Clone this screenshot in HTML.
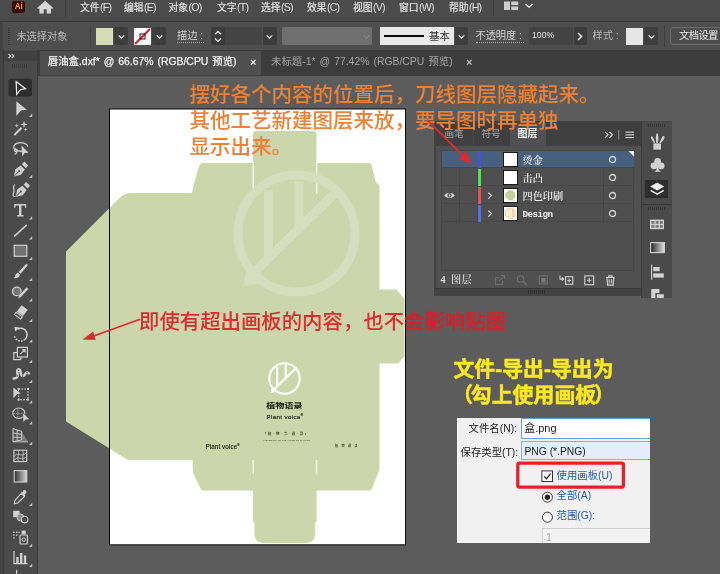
<!DOCTYPE html>
<html lang="zh-CN">
<head>
<meta charset="utf-8">
<title>Illustrator</title>
<style>
html,body{margin:0;padding:0;}
body{width:720px;height:574px;overflow:hidden;position:relative;background:#5c5c5c;
  font-family:"Liberation Sans","Noto Sans CJK SC",sans-serif;color:#d6d6d6;}
.abs{position:absolute;}
.t{position:absolute;white-space:nowrap;line-height:1;}
/* top bars */
#menubar{left:0;top:0;width:720px;height:21px;background:#4b4b4b;}
#ctrlbar{left:0;top:22px;width:720px;height:28px;background:#4e4e4e;}
#tabbar{left:0;top:50px;width:720px;height:26px;background:#3c3c3c;}
.menu{font-size:9.8px;top:2.2px;color:#e2e2e2;-webkit-text-stroke:0.2px #e2e2e2;}
.ml{font-size:10.6px;letter-spacing:-0.75px;-webkit-text-stroke:0;margin-left:0.3px}
.ctl{font-size:10.2px;color:#d2d2d2;top:31px;}
.dd{position:absolute;top:27px;height:18px;background:#3d3d3d;border-radius:2px;}
.chev{position:absolute;width:9px;height:6px;transform:scale(0.8);}
/* toolbar */
#toolbar{left:0;top:72px;width:31px;height:502px;background:#4b4b4b;}
/* layers */
#layers{left:435px;top:121px;width:206px;height:175px;background:#4d4d4d;}
.row{position:absolute;left:6px;width:194px;height:17px;border-bottom:1px solid #454545;}
.lname{position:absolute;left:81px;top:2px;font-size:11px;line-height:14px;color:#e2e2e2;
  font-family:"Liberation Mono","Noto Serif CJK SC",monospace;white-space:nowrap;}
/* dialog */
#dlg{left:457px;top:418px;width:193px;height:124.5px;background:#f1f1f1;overflow:hidden;color:#111;box-shadow:inset 1px 0 0 #fafafa, inset 0 -1px 0 #fafafa;}
</style>
</head>
<body>
<div id="wrap" style="position:absolute;left:0;top:0;width:720px;height:574px;will-change:transform;">


<!-- ===== top bars ===== -->
<div class="abs" id="menubar"></div>
<div class="abs" style="left:0;top:21px;width:720px;height:1px;background:#3a3a3a"></div>
<div class="abs" id="ctrlbar"></div>
<div class="abs" id="tabbar"></div>
<!-- Ai logo -->
<div class="abs" style="left:12px;top:1px;width:13.2px;height:12.2px;border-radius:2.4px;background:#3a0b04;"></div>
<div class="t" style="left:14.8px;top:2.8px;font-size:8.2px;font-weight:bold;color:#ff9d2a;letter-spacing:-0.1px">Ai</div>
<!-- home -->
<svg class="abs" style="left:37px;top:0" width="17" height="14" viewBox="37 0 17 14"><path fill="#d8d8d8" d="M45.2,0.8 L53.2,8 L52.4,8.9 L51,8.2 L51,13.4 L46.7,13.4 L46.7,9.2 L43.7,9.2 L43.7,13.4 L39.4,13.4 L39.4,8.2 L38,8.9 L37.2,8 Z"/></svg>
<div class="abs" style="left:65px;top:0;width:1px;height:17px;background:#3c3c3c"></div>
<div class="t menu" style="left:80px">文件<span class="ml">(F)</span></div>
<div class="t menu" style="left:124px">编辑<span class="ml">(E)</span></div>
<div class="t menu" style="left:168.5px">对象<span class="ml">(O)</span></div>
<div class="t menu" style="left:217px">文字<span class="ml">(T)</span></div>
<div class="t menu" style="left:261px">选择<span class="ml">(S)</span></div>
<div class="t menu" style="left:307px">效果<span class="ml">(C)</span></div>
<div class="t menu" style="left:353px">视图<span class="ml">(V)</span></div>
<div class="t menu" style="left:399px">窗口<span class="ml">(W)</span></div>
<div class="t menu" style="left:449px">帮助<span class="ml">(H)</span></div>
<div class="abs" style="left:493px;top:0;width:1px;height:16px;background:#3a3a3a"></div>
<svg class="abs" style="left:504px;top:1px" width="30" height="10" viewBox="0 0 30 10"><g fill="#cfcfcf"><rect x="0" y="0.5" width="6" height="8.5"/><rect x="7.2" y="0.5" width="7" height="3.6"/><rect x="7.2" y="5.4" width="7" height="3.6"/></g><path d="M21.5,3 L25,6.2 L28.5,3" fill="none" stroke="#e0e0e0" stroke-width="1.5"/></svg>

<!-- control bar -->
<div class="abs" style="left:0;top:22px;width:3.2px;height:28px;background:#434343"></div>
<div class="abs" style="left:0;top:49.5px;width:720px;height:1px;background:#3a3a3a"></div>
<svg class="abs" style="left:7px;top:27px" width="4" height="19" viewBox="0 0 4 19"><g fill="#383838"><rect x="1" y="1" width="2" height="1"/><rect x="1" y="3" width="2" height="1"/><rect x="1" y="5" width="2" height="1"/><rect x="1" y="7" width="2" height="1"/><rect x="1" y="9" width="2" height="1"/><rect x="1" y="11" width="2" height="1"/><rect x="1" y="13" width="2" height="1"/><rect x="1" y="15" width="2" height="1"/><rect x="1" y="17" width="2" height="1"/></g></svg>
<div class="abs" style="left:90px;top:26px;width:1px;height:21px;background:#444"></div>
<div class="t ctl" style="left:16.4px;top:31.6px;color:#b9b9b9">未选择对象</div>
<div class="abs" style="left:96px;top:28px;width:17px;height:17px;background:#d6ddb6"></div>
<div class="dd" style="left:114px;width:14px"></div>
<svg class="chev" style="left:116.5px;top:33.5px" viewBox="0 0 9 6"><path d="M1,1 L4.5,4.5 L8,1" fill="none" stroke="#f0f0f0" stroke-width="1.5"/></svg>
<svg class="abs" style="left:134px;top:28px" width="17" height="17" viewBox="0 0 17 17"><rect width="17" height="17" fill="#fafafa"/><line x1="1" y1="16" x2="16" y2="1" stroke="#e0202a" stroke-width="2"/><rect x="6" y="6" width="5" height="5" fill="none" stroke="#222" stroke-width="1"/></svg>
<div class="dd" style="left:152px;width:14px"></div>
<svg class="chev" style="left:154.5px;top:33.5px" viewBox="0 0 9 6"><path d="M1,1 L4.5,4.5 L8,1" fill="none" stroke="#f0f0f0" stroke-width="1.5"/></svg>
<div class="t ctl" style="left:177px;border-bottom:1px dotted #a8a8a8;padding-bottom:1px;width:27px">描边 :</div>
<div class="abs" style="left:211px;top:27px;width:13.5px;height:18px;background:#3c3c3c;border-radius:2px 0 0 2px"></div>
<svg class="abs" style="left:213px;top:29px" width="10" height="15" viewBox="0 0 10 15"><path d="M2,5.2 L5,2.4 L8,5.2 M2,9.6 L5,12.4 L8,9.6" fill="none" stroke="#e8e8e8" stroke-width="1.3"/></svg>
<div class="abs" style="left:225px;top:27px;width:36.5px;height:18px;background:#444444"></div>
<div class="abs" style="left:262.5px;top:27px;width:14px;height:18px;background:#3c3c3c;border-radius:0 2px 2px 0"></div>
<svg class="chev" style="left:265px;top:33.5px" viewBox="0 0 9 6"><path d="M1,1 L4.5,4.5 L8,1" fill="none" stroke="#e0e0e0" stroke-width="1.5"/></svg>
<div class="abs" style="left:282px;top:27px;width:90px;height:18px;background:#6f6f6f;border-radius:2px"></div>
<svg class="chev" style="left:362px;top:33.5px" viewBox="0 0 9 6"><path d="M1,1 L4.5,4.5 L8,1" fill="none" stroke="#888" stroke-width="1.5"/></svg>
<div class="abs" style="left:380px;top:27px;width:74px;height:18px;background:#e9e9e9;"></div>
<div class="abs" style="left:384px;top:35px;width:40px;height:2px;background:#0a0a0a;"></div>
<div class="t" style="left:429px;top:31px;font-size:10.5px;color:#333">基本</div>
<div class="dd" style="left:455px;width:13px;border-radius:0 2px 2px 0"></div>
<svg class="chev" style="left:457px;top:33.5px" viewBox="0 0 9 6"><path d="M1,1 L4.5,4.5 L8,1" fill="none" stroke="#f0f0f0" stroke-width="1.5"/></svg>
<div class="t ctl" style="left:475.5px;border-bottom:1px dotted #a8a8a8;padding-bottom:1px;width:48px">不透明度 :</div>
<div class="abs" style="left:529px;top:27px;width:44px;height:18px;background:#434343;border-radius:2px 0 0 2px"></div>
<div class="t" style="left:532px;top:31px;font-size:8.7px;color:#e6e6e6">100%</div>
<div class="abs" style="left:574px;top:27px;width:12.5px;height:18px;background:#3c3c3c;border-radius:0 2px 2px 0"></div>
<svg class="abs" style="left:577px;top:31.5px" width="6" height="9" viewBox="0 0 6 9"><path d="M1,1 L4.5,4.5 L1,8" fill="none" stroke="#f0f0f0" stroke-width="1.5"/></svg>
<div class="t ctl" style="left:592.5px;color:#b9b9b9">样式 :</div>
<div class="abs" style="left:626px;top:28px;width:17px;height:17px;background:#e6e6e6"></div>
<div class="dd" style="left:644px;width:14px"></div>
<svg class="chev" style="left:646.5px;top:33.5px" viewBox="0 0 9 6"><path d="M1,1 L4.5,4.5 L8,1" fill="none" stroke="#f0f0f0" stroke-width="1.5"/></svg>
<div class="abs" style="left:664px;top:26px;width:1px;height:21px;background:#3f3f3f"></div>
<div class="abs" style="left:670px;top:27px;width:60px;height:16px;border:1px solid #6b6b6b;border-radius:3px;background:#4c4c4c"></div>
<div class="t" style="left:679px;top:30.5px;font-size:10.3px;color:#ececec;letter-spacing:-0.6px">文档设置</div>

<!-- tab bar -->
<div class="abs" style="left:39.5px;top:50.5px;width:221.5px;height:24.5px;background:#4f4f4f"></div>
<div class="t" style="left:47.8px;top:57px;font-size:10.4px;word-spacing:1.1px;color:#f2f2f2;-webkit-text-stroke:0.25px #f2f2f2;">唇油盒.dxf* @ 66.67% (RGB/CPU 预览)</div>
<div class="t" style="left:250px;top:56.5px;font-size:11px;font-weight:bold;color:#f0f0f0;">×</div>
<div class="t" style="left:271px;top:57px;font-size:10.4px;word-spacing:1.2px;color:#a6a6a6;">未标题-1* @ 77.42% (RGB/CPU 预览)</div>
<div class="t" style="left:466px;top:56.5px;font-size:11px;font-weight:bold;color:#bdbdbd;">×</div>

<!-- ===== canvas & artwork ===== -->
<svg class="abs" style="left:0;top:75.5px" width="720" height="498.5" viewBox="0 75.5 720 498.5">
  <rect x="0" y="75.5" width="720" height="498.5" fill="#5c5c5c"/>
  <!-- artboard -->
  <rect x="109.5" y="108.5" width="296" height="435.8" fill="#ffffff"/>
  <!-- die shape -->
  <path id="die" fill="#cdd6aa" d="M66,251 L120,197 Q125,192.5 131,192.5 L192,192.5 L194.5,181 L199,166 Q200,162.5 203,162.5 L253,162.5 L253,134 Q253,130.5 257,130.5 L312,130.5 Q316.5,130.5 316.5,134 L316.5,162.5 L369,162.5 Q371,162.5 372,166 L375,179 Q376,183 379.5,185 L379.5,289 L396.5,289 L404.5,298.5 L404.5,355.5 L398,363 L379.5,363 L379.5,469 L378,473 L372,488 Q371.5,490 369,490 L316.6,490 L316.6,521 L315.2,522.4 L315.2,534 Q314.6,542 306.5,542.6 L263,542.6 Q255,542 254.4,534 L254.4,522.4 L253,521 L253,490 L203,490 Q201,490 200,487 L193,472 L192.5,459.5 L128,459.5 L66,421 Z"/>
  <!-- slits -->
  <g stroke="#ffffff" stroke-width="1.2">
    <line x1="253.2" y1="162" x2="253.2" y2="193"/>
    <line x1="316.6" y1="162" x2="316.6" y2="193"/>
    <line x1="253.3" y1="459.5" x2="253.3" y2="473.5"/>
    <line x1="316.5" y1="459.5" x2="316.5" y2="473.5"/>
  </g>
  <!-- big watermark logo -->
  <g fill="none" stroke="#d7debf" stroke-width="9" stroke-linejoin="round">
    <circle cx="296.5" cy="233" r="58.5"/>
    <line x1="335.5" y1="192" x2="250" y2="276"/>
    <line x1="299" y1="181" x2="299" y2="229"/>
    <path d="M268.5,189.5 L268.5,256"/>
  </g>
  <path d="M246,270 L243.5,285.5 L260,283 Z" fill="#d7debf"/>
  <!-- small white logo -->
  <g fill="none" stroke="#ffffff" stroke-width="2.1" stroke-linecap="butt">
    <circle cx="284.5" cy="378" r="15.2"/>
    <line x1="296.6" y1="367" x2="272.4" y2="390.6"/>
    <line x1="285.7" y1="364" x2="285.7" y2="377"/>
    <line x1="277.1" y1="366.4" x2="277.1" y2="385.4"/>
  </g>
  <path d="M271.6,388 L270.4,392.6 L275.4,391.8 Z" fill="#ffffff"/>
  <!-- artboard border -->
  <rect x="109.5" y="108.5" width="296" height="435.8" fill="none" stroke="#0a0a0a" stroke-width="1"/>
</svg>


<!-- ===== toolbar ===== -->
<div class="abs" style="left:0;top:50px;width:37.6px;height:524px;background:#4a4a4a"></div>
<div class="abs" style="left:0;top:50px;width:3.2px;height:524px;background:#434343"></div>
<div class="abs" style="left:3.2px;top:50px;width:1px;height:524px;background:#383838"></div>
<div class="abs" style="left:37px;top:50px;width:1px;height:524px;background:#3a3a3a"></div>
<div class="abs" style="left:4.2px;top:51px;width:32.8px;height:10px;background:#414141"></div>
<svg class="abs" style="left:0;top:50px" width="38" height="524" viewBox="0 50 38 524">
 <path d="M8.6,54 L10.6,56 L8.6,58 M11.8,54 L13.8,56 L11.8,58" fill="none" stroke="#d8d8d8" stroke-width="1.1"/>
 <g fill="#3a3a3a"><rect x="12" y="64" width="1" height="4"/><rect x="14" y="64" width="1" height="4"/><rect x="16" y="64" width="1" height="4"/><rect x="18" y="64" width="1" height="4"/><rect x="20" y="64" width="1" height="4"/><rect x="22" y="64" width="1" height="4"/><rect x="24" y="64" width="1" height="4"/><rect x="26" y="64" width="1" height="4"/></g>
 <!-- 1 selection -->
 <rect x="8.5" y="78.8" width="23.6" height="17.8" rx="2" fill="#2d2d2d"/>
 <path d="M16.1,81.6 L25.5,88.7 L20.5,89.7 L16.7,94.4 Z" fill="none" stroke="#ededed" stroke-width="1.2" stroke-linejoin="miter"/>
 <!-- 2 direct selection -->
 <path d="M16.3,101.3 L26.8,109.7 L21,110.6 L16.3,116 Z" fill="#d0d0d0"/><path d="M32.2,113.8 L32.2,117 L29,117 Z" fill="#c4c4c4"/>
 <!-- 3 magic wand -->
 <line x1="14.4" y1="135" x2="21.6" y2="127.8" stroke="#d0d0d0" stroke-width="2"/>
 <path d="M24,120.8 L24.8,123.6 L27.6,124.4 L24.8,125.2 L24,128 L23.2,125.2 L20.4,124.4 L23.2,123.6 Z" fill="#d0d0d0"/>
 <path d="M16.8,123.6 L17.3,125.3 L19,125.8 L17.3,126.3 L16.8,128 L16.3,126.3 L14.6,125.8 L16.3,125.3 Z" fill="#d0d0d0"/>
 <path d="M25.6,127.6 L26.1,129.1 L27.6,129.6 L26.1,130.1 L25.6,131.6 L25.1,130.1 L23.6,129.6 L25.1,129.1 Z" fill="#d0d0d0"/>
 <!-- 4 lasso -->
 <path d="M22,151.2 C16,151.5 13.4,149 13.8,146.6 C14.3,143.6 18.5,142.4 22,142.8 C25.6,143.2 27.8,144.8 27.6,146.6" fill="none" stroke="#d0d0d0" stroke-width="1.3"/>
 <path d="M15.5,148.4 C13.8,149.4 14.2,151.8 16.2,151.6 C17.8,151.4 17.6,149.2 16.2,149.4 C17.4,150.6 17.2,153.6 14.6,154.4" fill="none" stroke="#d0d0d0" stroke-width="1.1"/>
 <path d="M21.4,145.6 L28.6,152.8 L24.6,153 L22.2,156.6 Z" fill="#d0d0d0"/>
 <!-- 5 pen -->
 <path d="M13.8,176.6 L15.4,169.2 L20.6,165.4 L24.8,169.6 L21,174.8 Z" fill="#d0d0d0"/>
 <path d="M14.2,176.2 L18.6,171.6" stroke="#4a4a4a" stroke-width="0.9"/><circle cx="19" cy="171.2" r="1" fill="#4a4a4a"/>
 <path d="M21.8,164.2 L24.4,161.6 L28.2,165.4 L25.8,168.2 Z" fill="#d0d0d0"/><path d="M32.2,174.8 L32.2,178 L29,178 Z" fill="#c4c4c4"/>
 <!-- 6 curvature -->
 <path d="M15.6,197 L17.2,189.6 L22.4,185.8 L26.6,190 L22.8,195.2 Z" fill="#d0d0d0"/>
 <path d="M16,196.6 L20.4,192" stroke="#4a4a4a" stroke-width="0.9"/><circle cx="20.8" cy="191.6" r="1" fill="#4a4a4a"/>
 <path d="M23.6,184.6 L26.2,182 L30,185.8 L27.6,188.6 Z" fill="#d0d0d0"/>
 <path d="M14.6,184.4 C11.6,188.4 15.8,190 13.4,193.6 C12.4,195.6 13.6,196.8 15.4,196.4" fill="none" stroke="#d0d0d0" stroke-width="1.2"/>
 <!-- 7 type -->
 <path d="M14.2,204 L26.2,204 L26.2,207.8 L25.2,207.8 L24.6,205.6 L21.4,205.6 L21.4,214.8 L23.6,215.4 L23.6,216.4 L16.8,216.4 L16.8,215.4 L19,214.8 L19,205.6 L15.8,205.6 L15.2,207.8 L14.2,207.8 Z" fill="#d0d0d0"/><path d="M32.2,216.3 L32.2,219.5 L29,219.5 Z" fill="#c4c4c4"/>
 <!-- 8 line -->
 <line x1="14.2" y1="236.4" x2="26.8" y2="224.9" stroke="#d0d0d0" stroke-width="1.5"/><path d="M32.2,236.3 L32.2,239.5 L29,239.5 Z" fill="#c4c4c4"/>
 <!-- 9 rect -->
 <rect x="14.2" y="245.3" width="12.6" height="11" fill="#727272" stroke="#d0d0d0" stroke-width="1.2"/><path d="M32.2,256.8 L32.2,260 L29,260 Z" fill="#c4c4c4"/>
 <!-- 10 brush -->
 <path d="M26.6,264 C27.6,264.4 27.8,265.2 27.2,266 L20.6,273.8 L18.6,272 L25.6,264.4 C26,264 26.2,263.9 26.6,264 Z" fill="#d0d0d0"/>
 <path d="M18,272.8 L19.9,274.6 C19.8,277.4 17,278.8 13.8,278.2 C15.6,277 14.8,273.6 18,272.8 Z" fill="#d0d0d0"/><path d="M32.2,277.8 L32.2,281 L29,281 Z" fill="#c4c4c4"/>
 <!-- 11 shaper -->
 <circle cx="16.8" cy="291.4" r="4.3" fill="#767676" stroke="#d0d0d0" stroke-width="1.3"/>
 <path d="M18,298.6 L18.8,295.4 L26.6,287 L28.6,289 L20.8,297.4 Z" fill="#d0d0d0" stroke="#4a4a4a" stroke-width="0.5"/><path d="M32.2,298.3 L32.2,301.5 L29,301.5 Z" fill="#c4c4c4"/>
 <!-- 12 eraser -->
 <path d="M21.6,305.2 L27.8,309.8 L23,316 L16.8,311.4 Z" fill="#d0d0d0"/>
 <path d="M16.2,312.2 L22.4,316.8 L20.6,319 L14.4,314.4 Z" fill="none" stroke="#d0d0d0" stroke-width="1.1"/><path d="M32.2,318.8 L32.2,322 L29,322 Z" fill="#c4c4c4"/>
 <!-- 13 rotate -->
 <path d="M17.6,329 A6.4,6.4 0 1 1 14.6,336.4" fill="none" stroke="#d0d0d0" stroke-width="1.5" stroke-dasharray="20 1.2 1.6 1.2 1.6 1.2 1.6 1.2 1.6 1.2"/>
 <path d="M14.2,326.8 L19.4,327.4 L15.4,331.6 Z" fill="#d0d0d0"/><path d="M32.2,339.3 L32.2,342.5 L29,342.5 Z" fill="#c4c4c4"/>
 <!-- 14 scale -->
 <rect x="13.8" y="352.6" width="7" height="7" fill="none" stroke="#d0d0d0" stroke-width="1.2"/>
 <rect x="17.4" y="347.4" width="10" height="9.6" fill="#4a4a4a" stroke="#d0d0d0" stroke-width="1.2"/>
 <path d="M20.4,354.2 L24.6,350 M22.2,349.6 L25,349.6 L25,352.4" fill="none" stroke="#d0d0d0" stroke-width="1.1"/><path d="M32.2,359.8 L32.2,363 L29,363 Z" fill="#c4c4c4"/>
 <!-- 15 puppet warp -->
 <path d="M13.6,378.4 C16.6,378.6 18.6,376.6 17.6,373.8 C16.8,371.4 17,369.4 19,369.6 C21.2,369.8 20,372.6 21.2,374.8 C22.4,376.8 24.4,375.8 25.2,374 C26,372.2 27.8,371.8 28.8,373.4" fill="none" stroke="#d0d0d0" stroke-width="2.5" stroke-linecap="round"/>
 <circle cx="18.6" cy="370.2" r="1.9" fill="#d0d0d0"/>
 <circle cx="18.6" cy="370.2" r="0.7" fill="#4a4a4a"/><circle cx="17.8" cy="376" r="0.7" fill="#4a4a4a"/><circle cx="22.6" cy="376" r="0.7" fill="#4a4a4a"/><circle cx="27" cy="372.8" r="0.7" fill="#4a4a4a"/>
 <path d="M32.2,379.8 L32.2,383 L29,383 Z" fill="#c4c4c4"/>
 <!-- 16 free transform -->
 <path d="M13.4,387.4 L20.8,393.6 L16.8,394.2 L13.4,398.6 Z" fill="#d0d0d0"/>
 <rect x="18.6" y="389" width="9.4" height="10.6" fill="none" stroke="#d0d0d0" stroke-width="1.1" stroke-dasharray="1.6 1.3"/>
 <g fill="#d0d0d0"><rect x="17.6" y="388" width="2" height="2"/><rect x="27" y="388" width="2" height="2"/><rect x="27" y="398.6" width="2" height="2"/><rect x="17.6" y="398.6" width="2" height="2"/></g><path d="M32.2,400.3 L32.2,403.5 L29,403.5 Z" fill="#c4c4c4"/>
 <!-- 17 shape builder -->
 <ellipse cx="18.8" cy="413.2" rx="6" ry="5.2" fill="none" stroke="#d0d0d0" stroke-width="1.1"/>
 <path d="M13.8,413.4 L21.6,413.4 M17.8,409.4 L17.8,417.4" stroke="#d0d0d0" stroke-width="0.7" stroke-dasharray="1.4 0.8"/>
 <path d="M22.6,412.4 L29.8,419.4 L25.6,419.8 L23.2,422.6 Z" fill="#d0d0d0" stroke="#4a4a4a" stroke-width="0.5"/>
 <path d="M32.2,421.3 L32.2,424.5 L29,424.5 Z" fill="#c4c4c4"/>
 <!-- 18 perspective grid -->
 <path d="M21.6,431.6 L28,441.4 L21.6,441.4 Z" fill="#7a7a7a"/>
 <path d="M13,428.6 L21.6,431.4 L21.6,440 L13,441.6 Z" fill="#555" stroke="#d0d0d0" stroke-width="1"/>
 <path d="M17.2,430 L17.2,440.8 M13,433 L21.6,434.4 M13,437.2 L21.6,437.4" stroke="#d0d0d0" stroke-width="0.9" fill="none"/>
 <path d="M12.6,441.8 L28,441.8" stroke="#d0d0d0" stroke-width="0.9"/>
 <path d="M32.2,441.8 L32.2,445 L29,445 Z" fill="#c4c4c4"/>
 <!-- 19 mesh -->
 <rect x="13.9" y="450.2" width="12.8" height="11.4" fill="none" stroke="#d0d0d0" stroke-width="1.1"/>
 <path d="M13.9,457 C17,450.6 21.6,458.6 26.7,452.4 M13.9,460.6 C18,454.6 22,462 26.7,456.4 M17.6,450.2 C21,453 15.4,458 19,461.6 M22,450.2 C25.6,453.6 20.4,458 24,461.6" fill="none" stroke="#d0d0d0" stroke-width="0.8"/>
 <!-- 20 gradient -->
 <rect x="14.2" y="470.6" width="12.6" height="11.4" fill="url(#tg)" stroke="#d0d0d0" stroke-width="1.1"/>
 <!-- 21 eyedropper -->
 <path d="M23.2,490.6 C24.6,489 27.4,491.2 26.2,493 L24.6,494.8 L25.4,495.6 L24.4,496.6 L20.8,493 L21.8,492 L22.6,492.6 Z" fill="#d0d0d0"/>
 <path d="M21.2,493.4 L24.4,496.6 L17.6,503 L14.2,504 L15,500.4 Z" fill="none" stroke="#d0d0d0" stroke-width="1.1" stroke-linejoin="round"/><path d="M32.2,502.8 L32.2,506 L29,506 Z" fill="#c4c4c4"/>
 <!-- 22 blend -->
 <rect x="13.2" y="510.8" width="6.4" height="6.4" fill="#d0d0d0"/>
 <circle cx="20.4" cy="517.4" r="3.4" fill="#8a8a8a" stroke="#d0d0d0" stroke-width="0.9"/>
 <circle cx="24.6" cy="519.6" r="3.3" fill="#4a4a4a" stroke="#d0d0d0" stroke-width="1.1"/>
 <!-- 23 symbol sprayer -->
 <rect x="20" y="535" width="7.4" height="9" rx="1" fill="none" stroke="#d0d0d0" stroke-width="1.2"/>
 <rect x="21.6" y="530.6" width="4.2" height="3.6" fill="#d0d0d0"/>
 <circle cx="23.7" cy="539.6" r="1.7" fill="none" stroke="#d0d0d0" stroke-width="1"/>
 <g fill="#d0d0d0"><rect x="13.2" y="531.6" width="1.4" height="1.4"/><rect x="16" y="531.6" width="1.4" height="1.4"/><rect x="18.4" y="531.6" width="1.2" height="1.4"/><rect x="13.2" y="534.4" width="1.4" height="1.4"/><rect x="16" y="534.4" width="1.4" height="1.4"/><rect x="13.2" y="537.2" width="1.4" height="1.4"/></g><path d="M32.2,543.8 L32.2,547 L29,547 Z" fill="#c4c4c4"/>
 <!-- 24 graph -->
 <path d="M14,551 L14,563.6 L27.6,563.6" fill="none" stroke="#d0d0d0" stroke-width="1.2"/>
 <g fill="#d0d0d0"><rect x="16.2" y="557" width="2.4" height="6"/><rect x="20" y="553" width="2.4" height="10"/><rect x="23.8" y="555.4" width="2.4" height="7.6"/></g><path d="M32.2,563.8 L32.2,567 L29,567 Z" fill="#c4c4c4"/>
 <line x1="16.6" y1="570" x2="16.6" y2="574" stroke="#d0d0d0" stroke-width="1.2"/>
 <defs><linearGradient id="tg" x1="0" x2="1" y1="0" y2="0"><stop offset="0" stop-color="#2e2e2e"/><stop offset="1" stop-color="#d8d8d8"/></linearGradient></defs>
</svg>


<!-- ===== layers panel ===== -->
<div class="abs" style="left:434px;top:121px;width:207px;height:175px;background:#414141"></div>
<div class="abs" style="left:435.5px;top:122.5px;width:205px;height:23px;background:#3f3f3f"></div>
<div class="abs" style="left:435.5px;top:145.5px;width:205px;height:143px;background:#505050"></div>
<div class="abs" style="left:509.5px;top:122.5px;width:36px;height:24px;background:#505050"></div>
<div class="abs" style="left:472.5px;top:124px;width:1px;height:21px;background:#4a4a4a"></div>
<div class="t" style="left:444.5px;top:128.5px;font-size:9.6px;color:#a8a8a8;">画笔</div>
<div class="t" style="left:481.5px;top:128.5px;font-size:9.6px;color:#a8a8a8;">符号</div>
<div class="t" style="left:517.5px;top:128.5px;font-size:10px;color:#f4f4f4;font-weight:bold">图层</div>
<svg class="abs" style="left:603px;top:128px" width="34" height="14" viewBox="0 0 34 14"><path d="M2,3.8 L5,6.8 L2,9.8 M6.4,3.8 L9.4,6.8 L6.4,9.8" fill="none" stroke="#dcdcdc" stroke-width="1.2"/><rect x="15.2" y="2" width="1.1" height="9.5" fill="#8a8a8a"/><g fill="#d8d8d8"><rect x="22.4" y="3.6" width="8.6" height="1.1"/><rect x="22.4" y="6.3" width="8.6" height="1.1"/><rect x="22.4" y="9" width="8.6" height="1.1"/></g></svg>
<!-- list box -->
<div class="abs" style="left:441px;top:150px;width:193px;height:121px;border:1px solid #474747;box-sizing:border-box;background:#4e4e4e"></div>
<div class="abs" style="left:459px;top:150.5px;width:1px;height:72px;background:#444"></div>
<div class="abs" style="left:476.8px;top:150.5px;width:1px;height:72px;background:#444"></div>
<div class="abs" style="left:603.4px;top:150.5px;width:1px;height:72px;background:#454545"></div>
<div class="abs" style="left:441.5px;top:150.5px;width:192.5px;height:17.5px;background:#46607e;border-bottom:1px solid #474747;box-sizing:border-box"></div>
<div class="abs" style="left:477.8px;top:151.0px;width:3.4px;height:16.5px;background:#4a4ee6"></div>
<svg class="abs" style="left:502.8px;top:151.9px" width="15" height="15" viewBox="0 0 16 16"><rect x="0.5" y="0.5" width="15" height="15" fill="#ffffff" stroke="#111" stroke-width="1"/></svg>
<div class="t" style="left:522.5px;top:156.0px;font-size:10.2px;color:#ededed;font-family:'Liberation Serif','Noto Serif CJK SC',serif;font-weight:600">烫金</div>
<svg class="abs" style="left:608px;top:155.0px" width="9" height="9" viewBox="0 0 9 9"><circle cx="4.5" cy="4.5" r="3" fill="none" stroke="#d4d4d4" stroke-width="1.3"/></svg>
<div class="abs" style="left:441.5px;top:168.5px;width:192.5px;height:17.5px;background:transparent;border-bottom:1px solid #474747;box-sizing:border-box"></div>
<div class="abs" style="left:477.8px;top:169.0px;width:3.4px;height:16.5px;background:#4ee64e"></div>
<svg class="abs" style="left:502.8px;top:169.9px" width="15" height="15" viewBox="0 0 16 16"><rect x="0.5" y="0.5" width="15" height="15" fill="#ffffff" stroke="#111" stroke-width="1"/></svg>
<div class="t" style="left:522.5px;top:174.0px;font-size:10.2px;color:#ededed;font-family:'Liberation Serif','Noto Serif CJK SC',serif;font-weight:600">击凸</div>
<svg class="abs" style="left:608px;top:173.0px" width="9" height="9" viewBox="0 0 9 9"><circle cx="4.5" cy="4.5" r="3" fill="none" stroke="#d4d4d4" stroke-width="1.3"/></svg>
<div class="abs" style="left:441.5px;top:186.5px;width:192.5px;height:17.5px;background:transparent;border-bottom:1px solid #474747;box-sizing:border-box"></div>
<div class="abs" style="left:477.8px;top:187.0px;width:3.4px;height:16.5px;background:#e65050"></div>
<svg class="abs" style="left:487px;top:191.0px" width="6" height="9" viewBox="0 0 6 9"><path d="M1.4,1.6 L4.4,4.6 L1.4,7.6" fill="none" stroke="#e8e8e8" stroke-width="1.2"/></svg>
<svg class="abs" style="left:502.8px;top:187.9px" width="15" height="15" viewBox="0 0 16 16"><rect x="0.5" y="0.5" width="15" height="15" fill="#ffffff" stroke="#111" stroke-width="1"/><path d="M5.4,2.4 L10.4,2.4 L10.6,4 L12.6,4.4 L13,7 L12.8,11 L10.8,11.2 L10.6,13.4 L6,13.4 L5.8,11.4 L3.6,11.2 L2.4,9.6 L2.4,5.6 L3.8,4.2 L5.2,4 Z" fill="#c3d19c"/></svg>
<div class="t" style="left:522.5px;top:192.0px;font-size:10.2px;color:#ededed;font-family:'Liberation Serif','Noto Serif CJK SC',serif;font-weight:600">四色印刷</div>
<svg class="abs" style="left:608px;top:191.0px" width="9" height="9" viewBox="0 0 9 9"><circle cx="4.5" cy="4.5" r="3" fill="none" stroke="#d4d4d4" stroke-width="1.3"/></svg>
<div class="abs" style="left:441.5px;top:204.5px;width:192.5px;height:17.5px;background:transparent;border-bottom:1px solid #474747;box-sizing:border-box"></div>
<div class="abs" style="left:477.8px;top:205.0px;width:3.4px;height:16.5px;background:#4e74e6"></div>
<svg class="abs" style="left:487px;top:209.0px" width="6" height="9" viewBox="0 0 6 9"><path d="M1.4,1.6 L4.4,4.6 L1.4,7.6" fill="none" stroke="#e8e8e8" stroke-width="1.2"/></svg>
<svg class="abs" style="left:502.8px;top:205.9px" width="15" height="15" viewBox="0 0 16 16"><rect x="0.5" y="0.5" width="15" height="15" fill="#ffffff" stroke="#111" stroke-width="1"/><path d="M5.4,2.4 L10.4,2.4 L10.6,4 L12.6,4.4 L13,7 L12.8,11 L10.8,11.2 L10.6,13.4 L6,13.4 L5.8,11.4 L3.6,11.2 L2.4,9.6 L2.4,5.6 L3.8,4.2 L5.2,4 Z" fill="#fff1d2" stroke="#f2b27c" stroke-width="0.7"/><path d="M10.6,4 L10.6,11.4" stroke="#e88a6a" stroke-width="0.6"/></svg>
<div class="t" style="left:522.5px;top:209.5px;font-size:9.3px;letter-spacing:-0.6px;color:#ededed;font-family:'Liberation Mono',monospace;font-weight:bold">Design</div>
<svg class="abs" style="left:608px;top:209.0px" width="9" height="9" viewBox="0 0 9 9"><circle cx="4.5" cy="4.5" r="3" fill="none" stroke="#d4d4d4" stroke-width="1.3"/></svg>

<svg class="abs" style="left:628px;top:150.5px" width="6" height="6" viewBox="0 0 6 6"><path d="M0.5,0 L6,0 L6,5.5 Z" fill="#f4f4f4"/></svg>
<!-- eye -->
<svg class="abs" style="left:444px;top:190.5px" width="11" height="9" viewBox="0 0 11 9"><path d="M0.3,4.5 C2,1.2 9,1.2 10.7,4.5 C9,7.8 2,7.8 0.3,4.5 Z" fill="#d6d6d6"/><circle cx="5.5" cy="4.4" r="2.1" fill="#4b4b4b"/><circle cx="5.5" cy="4.4" r="1" fill="#d6d6d6"/></svg>
<!-- bottom bar -->
<div class="t" style="left:440.5px;top:275px;font-size:10.2px;color:#d8d8d8;font-family:'Liberation Serif','Noto Serif CJK SC',serif;font-weight:600;letter-spacing:0.2px;word-spacing:2.5px">4 图层</div>
<svg class="abs" style="left:494px;top:273.5px" width="124" height="13" viewBox="494 273.5 124 13">
 <g fill="none" stroke="#6e6e6e" stroke-width="1.1">
  <path d="M499.5,277.2 L495.6,277.2 L495.6,284 L502.6,284 L502.6,280.4"/><path d="M499,280.6 L504.4,275.2 M501,275 L504.6,275 L504.6,278.6"/>
  <circle cx="520.6" cy="278.4" r="3.2"/><path d="M523,280.8 L526.6,284.4" stroke-width="1.5"/>
  <rect x="539.2" y="275.4" width="8" height="8"/>
 </g>
 <rect x="541.4" y="277.6" width="4.2" height="4.4" fill="#7a7a7a"/>
 <g fill="none" stroke="#d2d2d2" stroke-width="1.1">
  <path d="M560,275 L560,278.6 L563.6,278.6 M562,277 L563.8,278.6 L562,280.2"/>
  <rect x="565.6" y="276.2" width="7.2" height="7.6"/><path d="M567.4,280 L571,280 M569.2,278.2 L569.2,281.8"/>
  <rect x="584.8" y="275.4" width="8.8" height="8.8"/><path d="M587,279.8 L591.4,279.8 M589.2,277.6 L589.2,282"/>
  <path d="M606,277 L614.8,277 M608.6,277 L608.6,275.4 L612.2,275.4 L612.2,277 M607,277.2 L607.6,284.6 L613.2,284.6 L613.8,277.2 M609.2,278.8 L609.2,283 M611.6,278.8 L611.6,283"/>
 </g>
</svg>
<div class="abs" style="left:434px;top:288px;width:207px;height:8px;background:#424242;border-top:1px solid #383838;box-sizing:border-box"></div>
<svg class="abs" style="left:528px;top:289.5px" width="18" height="4" viewBox="0 0 18 4"><g fill="#2f2f2f"><rect x="0" width="1" height="3.6"/><rect x="2" width="1" height="3.6"/><rect x="4" width="1" height="3.6"/><rect x="6" width="1" height="3.6"/><rect x="8" width="1" height="3.6"/><rect x="10" width="1" height="3.6"/><rect x="12" width="1" height="3.6"/><rect x="14" width="1" height="3.6"/><rect x="16" width="1" height="3.6"/></g></svg>

<!-- ===== icon dock ===== -->
<div class="abs" style="left:641px;top:121px;width:30.5px;height:176.5px;background:#4a4a4a;border-left:1px solid #3c3c3c;box-sizing:border-box"></div>
<div class="abs" style="left:642px;top:203.5px;width:29.5px;height:1px;background:#383838"></div>
<div class="abs" style="left:645.2px;top:180.2px;width:22.6px;height:17.4px;background:#2d2d2d"></div>
<svg class="abs" style="left:641px;top:121px" width="31" height="177" viewBox="641 121 31 177">
 <g fill="#333"><rect x="648" y="124" width="1" height="3"/><rect x="650" y="124" width="1" height="3"/><rect x="652" y="124" width="1" height="3"/><rect x="654" y="124" width="1" height="3"/><rect x="656" y="124" width="1" height="3"/><rect x="658" y="124" width="1" height="3"/><rect x="660" y="124" width="1" height="3"/><rect x="662" y="124" width="1" height="3"/><rect x="664" y="124" width="1" height="3"/>
 <rect x="648" y="207" width="1" height="3"/><rect x="650" y="207" width="1" height="3"/><rect x="652" y="207" width="1" height="3"/><rect x="654" y="207" width="1" height="3"/><rect x="656" y="207" width="1" height="3"/><rect x="658" y="207" width="1" height="3"/><rect x="660" y="207" width="1" height="3"/><rect x="662" y="207" width="1" height="3"/><rect x="664" y="207" width="1" height="3"/></g>
 <!-- brushes -->
 <g fill="#d2d2d2"><rect x="653.4" y="143.4" width="7.6" height="6.2"/>
  <path d="M656.4,133.4 L657.8,133.4 L658.4,137.6 L658,143 L656.2,143 L655.8,137.6 Z"/>
  <path d="M651,138.2 C650.6,136.4 652,135.6 652.6,137 C654,139 654.6,141 655,143 L653.8,143 C653.2,141.4 652,140.4 651,138.2 Z"/>
  <path d="M664.6,137.4 C664.6,135.6 662.6,135.4 662.2,137 C661,139.6 660.2,141 659.4,143 L660.8,143 C661.6,141.4 664,140 664.6,137.4 Z"/></g>
 <!-- symbols (club) -->
 <g fill="#d2d2d2"><circle cx="657.6" cy="161.4" r="3.4"/><circle cx="654" cy="165.8" r="3.4"/><circle cx="661.2" cy="165.8" r="3.4"/><path d="M656.8,165 L658.4,165 L658.8,170 L661,171.8 L654.2,171.8 L656.4,170 Z"/></g>
 <!-- layers -->
 <path d="M657.2,182.4 L664.2,186.4 L657.2,190.4 L650.2,186.4 Z" fill="#ececec"/>
 <path d="M650.6,190.4 L657.2,194.2 L663.8,190.4" fill="none" stroke="#ececec" stroke-width="1.6"/>
 <!-- swatches -->
 <rect x="650" y="219.6" width="14" height="9.6" fill="#d2d2d2"/>
 <g fill="#7c7c7c"><rect x="651.4" y="221" width="3" height="2.8"/><rect x="655.6" y="221" width="3" height="2.8"/><rect x="659.8" y="221" width="3" height="2.8"/><rect x="651.4" y="225" width="3" height="2.8"/><rect x="655.6" y="225" width="3" height="2.8"/><rect x="659.8" y="225" width="3" height="2.8"/></g>
 <!-- gradient -->
 <rect x="650.6" y="242.6" width="13.8" height="10" fill="url(#dg)" stroke="#d2d2d2" stroke-width="1.1"/>
 <!-- align -->
 <g fill="#d2d2d2"><rect x="651" y="264.6" width="1.1" height="15.2"/><rect x="653.2" y="267" width="6.4" height="4.2"/><rect x="653.2" y="273.4" width="10.6" height="4.2"/></g>
 <!-- pathfinder -->
 <g fill="#d2d2d2"><path d="M651.2,289 L659.4,289 L659.4,293 L655.4,293 L655.4,298 L651.2,298 Z"/><rect x="656.8" y="294.2" width="7" height="4"/></g>
 <defs><linearGradient id="dg" x1="0" x2="1"><stop offset="0" stop-color="#262626"/><stop offset="1" stop-color="#e0e0e0"/></linearGradient></defs>
</svg>

<!-- package texts -->
<div class="t" style="left:266.3px;top:401.9px;font-size:9.05px;font-weight:900;color:#262b18;transform:scaleY(0.72);transform-origin:0 50%;">植物语录</div>
<div class="t" style="left:266.4px;top:413.8px;font-size:6.1px;color:#1f2414;letter-spacing:0.42px;-webkit-text-stroke:0.2px #1f2414">Plant voice<span style="font-size:3px;vertical-align:top;letter-spacing:0">®</span></div>
<div class="t" style="left:263px;top:432.6px;font-size:3.4px;color:#3a3f2c;letter-spacing:1.7px;font-weight:bold">「植·物·之·语·录」</div>
<div class="t" style="left:263.4px;top:439.4px;font-size:2.3px;color:#3a3f2c;letter-spacing:0.13px">LISTENING TO THE VOICE OF NATURE</div>
<div class="t" style="left:205.4px;top:443.8px;font-size:6.3px;color:#23281a;letter-spacing:0.1px;-webkit-text-stroke:0.15px #23281a">Plant voice<span style="font-size:3px;vertical-align:top">®</span></div>
<div class="t" style="left:335px;top:445.4px;font-size:3px;color:#3a3f2c;letter-spacing:3.5px;font-weight:bold">植物语录</div>



<!-- ===== annotations ===== -->
<div class="t" style="left:189.5px;top:82px;font-size:20.5px;line-height:26px;color:#ee8133;font-weight:500;white-space:pre">摆好各个内容的位置后，刀线图层隐藏起来。
其他工艺新建图层来放，要导图时再单独
显示出来。</div>

<div class="t" style="left:139px;top:311.5px;font-size:20.4px;color:#df2a30;font-weight:500;">即使有超出画板的内容，也不<span style="-webkit-text-stroke:0.35px #d4222c;color:#d4222c">会影响贴图</span></div>
<svg class="abs" style="left:0;top:0" width="720" height="574" viewBox="0 0 720 574">
 <g stroke="#e0282e" stroke-width="1.6" fill="#e0282e">
  <line x1="140" y1="319.2" x2="93" y2="336.2"/>
  <path d="M82.6,339.6 L93.2,331.4 L95.6,340 Z" stroke="none"/>
  <line x1="427" y1="119.6" x2="463" y2="155.8" stroke-width="1.9"/>
  <path d="M471.4,164.2 L458.6,158.8 L466,151 Z" stroke="none"/>
 </g>
</svg>
<div class="t" style="left:383.5px;width:300px;top:356px;font-size:20.9px;line-height:26px;font-weight:bold;color:#ffe820;-webkit-text-stroke:0.45px #ffe820;text-align:center;white-space:pre">文件-导出-导出为
<span style="margin-right:-2.4px">（</span>勾上使用画板<span style="margin-left:-2.4px">）</span></div>

<!-- ===== export dialog ===== -->
<div class="abs" id="dlg">
 <div class="t" style="left:11.5px;top:6.4px;font-size:10.4px;color:#1c1c1c">文件名(N):</div>
 <div class="abs" style="left:63.6px;top:0px;width:140px;height:21.4px;box-sizing:border-box;border:1px solid #6c9fce;background:#ffffff"></div>
 <div class="t" style="left:67.2px;top:5.2px;font-size:11px;color:#1c1c1c">盒.png</div>
 <div class="t" style="left:3.5px;top:29.5px;font-size:10.4px;color:#1c1c1c">保存类型(T):</div>
 <div class="abs" style="left:63.6px;top:22.6px;width:140px;height:19.6px;box-sizing:border-box;border:1px solid #86b0d8;background:#e2effa"></div>
 <div class="t" style="left:67.5px;top:28.8px;font-size:10.3px;color:#1c1c1c">PNG (*.PNG)</div>
 <svg class="abs" style="left:56px;top:42px" width="116" height="30" viewBox="56 42 116 30"><rect x="60.8" y="45.2" width="105.6" height="24" rx="1.6" fill="none" stroke="#e6202c" stroke-width="3.3"/></svg>
 <svg class="abs" style="left:84px;top:52px" width="13" height="13" viewBox="0 0 13 13"><rect x="0.9" y="0.9" width="10.6" height="10.6" fill="#fff" stroke="#333" stroke-width="1"/><path d="M3.2,6.4 L5.4,8.8 L9.6,3.6" fill="none" stroke="#222" stroke-width="1.3"/></svg>
 <div class="t" style="left:99.5px;top:52.5px;font-size:10.4px;color:#1d5cae">使用画板(U)</div>
 <svg class="abs" style="left:84px;top:73px" width="13" height="13" viewBox="0 0 13 13"><circle cx="6.4" cy="6.2" r="5" fill="#fff" stroke="#333" stroke-width="1"/><circle cx="6.4" cy="6.2" r="2.7" fill="#222"/></svg>
 <div class="t" style="left:99.5px;top:72.5px;font-size:10.4px;color:#1d5cae">全部(A)</div>
 <svg class="abs" style="left:84px;top:92.6px" width="13" height="13" viewBox="0 0 13 13"><circle cx="6.4" cy="6.2" r="5" fill="#fff" stroke="#333" stroke-width="1"/></svg>
 <div class="t" style="left:99.5px;top:92.5px;font-size:10.4px;color:#1d5cae">范围(G):</div>
 <div class="abs" style="left:85px;top:109.5px;width:120px;height:20px;box-sizing:border-box;border:1px solid #cfcfcf;background:#f3f3f3"></div>
 <div class="t" style="left:89px;top:114px;font-size:10.5px;color:#a0a0a0">1</div>
</div>

</div>
</body>
</html>
